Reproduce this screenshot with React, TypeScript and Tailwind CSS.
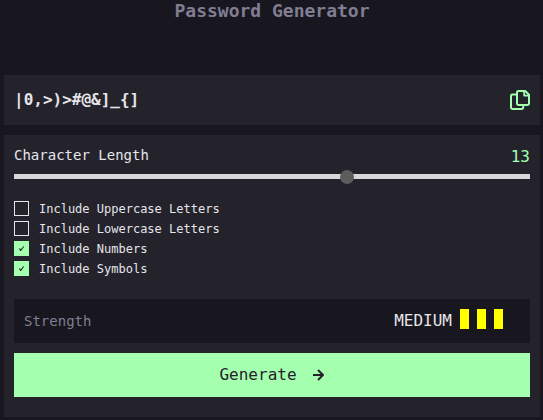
import { useState } from "react";

const OPTIONS = [
  { id: "upper", label: "Include Uppercase Letters", on: false },
  { id: "lower", label: "Include Lowercase Letters", on: false },
  { id: "numbers", label: "Include Numbers", on: true },
  { id: "symbols", label: "Include Symbols", on: true },
];

function CopyIcon() {
  return (
    <svg viewBox="0 0 20 20" className="block size-5" fill="none" stroke="currentColor" strokeWidth="2" strokeLinejoin="round" strokeLinecap="round" aria-hidden="true">
      <path d="M8.2 1H15.2L19 4.8V13.6a1.4 1.4 0 0 1-1.4 1.4H8.4a1.4 1.4 0 0 1-1.4-1.4V2.4A1.4 1.4 0 0 1 8.4 1Z" />
      <path d="M14.2 1.4V5.6H18.6" strokeWidth="1.8" />
      <path d="M6 4.5H2.4A1.4 1.4 0 0 0 1 5.9V17.6a1.4 1.4 0 0 0 1.4 1.4H11.8a1.4 1.4 0 0 0 1.4-1.4V15.5" />
    </svg>
  );
}

function ArrowIcon() {
  return (
    <svg viewBox="0 0 12 12" className="block size-3" fill="none" stroke="currentColor" strokeWidth="2" aria-hidden="true">
      <path d="M0 6H10M5 1L10 6L5 11" strokeLinejoin="round" />
    </svg>
  );
}

export default function App() {
  const [length, setLength] = useState(13);
  const [checked, setChecked] = useState(OPTIONS.map((o) => o.on));

  return (
    <main className="min-h-screen bg-[#18171f] pr-[3px] pb-[3px] pl-1 font-['DejaVu_Sans_Mono',monospace] text-[#e6e5ea]">
      <h1 className="h-[75px] text-center text-lg leading-[22px] font-bold text-[#817d92]">Password Generator</h1>

      <section className="flex h-[50px] items-center justify-between bg-[#24232c] px-2.5">
        <output className="text-base font-bold">{"|0,>)>#@&]_{]"}</output>
        <button type="button" aria-label="Copy password" className="text-[#a4ffaf]">
          <CopyIcon />
        </button>
      </section>

      <section className="mt-2.5 bg-[#24232c] px-2.5 pt-2.5 pb-5">
        <div className="flex h-6 items-start justify-between">
          <label htmlFor="length" className="text-sm leading-5">Character Length</label>
          <span className="text-base leading-6 text-[#a4ffaf]">{length}</span>
        </div>
        <input
          id="length"
          type="range"
          min={0}
          max={20}
          value={length}
          onChange={(e) => setLength(Number(e.target.value))}
          className="mt-[5px] block h-[5px] w-full appearance-none bg-[#d8d8d8] [&::-webkit-slider-thumb]:size-3.5 [&::-webkit-slider-thumb]:appearance-none [&::-webkit-slider-thumb]:rounded-full [&::-webkit-slider-thumb]:bg-[#5c5c5c]"
        />

        <div className="mt-5">
          {OPTIONS.map((o, i) => (
            <label key={o.id} className="flex h-5 items-start gap-2.5 text-xs leading-5">
              <span className="mt-0.5 grid size-[15px]">
                <input
                  type="checkbox"
                  checked={checked[i]}
                  onChange={() => setChecked(checked.map((c, j) => (j === i ? !c : c)))}
                  className="peer col-start-1 row-start-1 size-[15px] appearance-none border border-[#e6e5ea] checked:border-[#a4ffaf] checked:bg-[#a4ffaf]"
                />
                <svg viewBox="0 0 15 15" className="pointer-events-none invisible col-start-1 row-start-1 size-[15px] peer-checked:visible" aria-hidden="true">
                  <path d="M5 7.5L6 7.2L6.8 8.4L9.4 5.2L10.2 5.4L7 10H6.3Z" fill="#18171f" />
                </svg>
              </span>
              {o.label}
            </label>
          ))}
        </div>

        <div className="mt-5 flex h-11 items-start justify-between bg-[#18171f] p-2.5">
          <span className="text-sm leading-6 text-[#817d92]">Strength</span>
          <div className="flex items-start gap-2 pr-[17px]">
            <span className="text-base leading-6">MEDIUM</span>
            <span className="h-5 w-[9px] bg-[#ffff00]" />
            <span className="h-5 w-[9px] bg-[#ffff00]" />
            <span className="h-5 w-[9px] bg-[#ffff00]" />
          </div>
        </div>

        <button type="button" className="mt-2.5 flex h-11 w-full items-center justify-center gap-4 bg-[#a4ffaf] text-base text-[#24232c]">
          Generate
          <ArrowIcon />
        </button>
      </section>
    </main>
  );
}
